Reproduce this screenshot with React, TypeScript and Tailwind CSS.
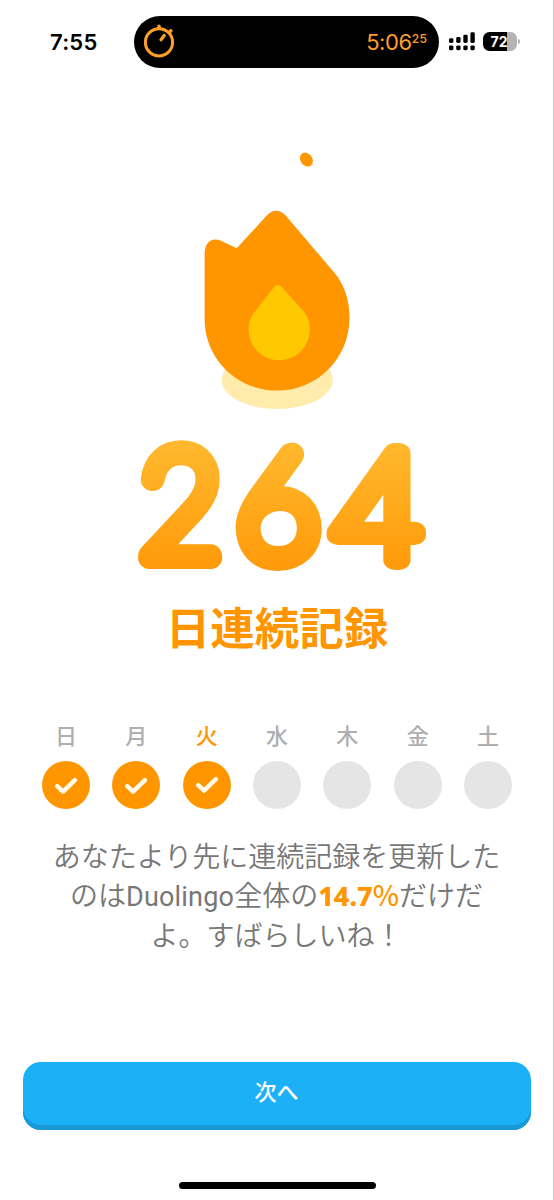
const days = [
  { label: "日", done: true },
  { label: "月", done: true },
  { label: "火", done: true, today: true },
  { label: "水", done: false },
  { label: "木", done: false },
  { label: "金", done: false },
  { label: "土", done: false },
];

function Stopwatch() {
  return (
    <svg className="ml-2.5 h-9 w-8" viewBox="0 0 32 36" fill="none" stroke="#ff9f2a" strokeLinecap="round">
      <circle cx="15" cy="20.3" r="13.6" strokeWidth="3" />
      <path d="M15 6V4.2M25.6 10l1.2-1.2" strokeWidth="3.6" />
      <path d="M17 17.8l3.2-4.3" strokeWidth="3.2" />
    </svg>
  );
}

function Signal() {
  return (
    <svg className="ml-[10px] h-[19px] w-[26px] shrink-0" viewBox="0 0 26 19" fill="#000">
      <rect x="0" y="6.2" width="4.4" height="4.8" rx="1.4" />
      <rect x="7.2" y="5" width="4.4" height="6" rx="1.4" />
      <rect x="14.3" y="2.7" width="4.4" height="8.3" rx="1.4" />
      <rect x="21.4" y="0.3" width="4.4" height="10.7" rx="1.4" />
      <rect x="0" y="13.4" width="4.4" height="4.8" rx="1.4" />
      <rect x="7.2" y="13.4" width="4.4" height="4.8" rx="1.4" />
      <rect x="14.3" y="13.4" width="4.4" height="4.8" rx="1.4" />
      <rect x="21.4" y="13.4" width="4.4" height="4.8" rx="1.4" />
    </svg>
  );
}

function StatusBar() {
  return (
    <header className="flex h-[52px] items-center font-['Inter',sans-serif]">
      <span className="ml-[50px] w-[84px] text-[22px] font-semibold leading-none tracking-[0.2px]">7:55</span>
      <div className="flex h-[52px] w-[305px] shrink-0 items-center justify-between rounded-full bg-black">
        <div className="-mt-[3px]">
          <Stopwatch />
        </div>
        <span className="mr-3 flex text-[22px] leading-none tracking-[-0.4px] text-[#ff9f2a]">
          5:06<sup className="top-0 mt-[2px] text-[12px] font-medium leading-none tracking-[0.2px]">25</sup>
        </span>
      </div>
      <Signal />
      <div className="ml-[8px] flex h-[19px] w-[34px] items-center justify-center rounded-[6.5px] bg-[linear-gradient(90deg,#000_72%,#b4b4b4_72%)] pr-0.5 text-[14px] font-bold leading-none text-white">
        72
      </div>
      <div className="ml-px h-[5px] w-[2px] rounded-r-full bg-[#b4b4b4]" />
    </header>
  );
}

function Flame() {
  return (
    <svg className="h-[280px] w-[180px]" viewBox="190 140 180 280">
      <ellipse cx="277.2" cy="380" rx="55.6" ry="29" fill="#ffecad" />
      <ellipse cx="306.4" cy="159.6" rx="6" ry="7.4" transform="rotate(-35 306.4 159.6)" fill="#ff9600" />
      <path
        d="M204.6 254C204.6 243 211 237 220.5 240.6L236.7 248.2L267.5 214.8Q276 206.8 285 214.8L334 272.2C344 284 349.5 299 349.5 317.5C349.5 359 317 390.6 277 390.6C237 390.6 204.6 359 204.6 319Z"
        fill="#ff9600"
      />
      <path
        d="M274.3 286.7Q277.8 283.3 281.4 286.7L303.5 311C307.5 316 309.8 322 309.8 329C309.8 346.5 296.5 360.2 279 360.2C262 360.2 248.7 346.5 248.7 329.5C248.7 322 251 316.5 255 311.5Z"
        fill="#ffc800"
      />
    </svg>
  );
}

// Thick rounded stroke over a thin face gives the digits their soft ends
function StreakCount() {
  return (
    <svg className="h-[150px] w-[310px] overflow-visible" viewBox="130 430 310 150">
      <defs>
        <linearGradient id="count" gradientUnits="userSpaceOnUse" x1="0" y1="440" x2="0" y2="572">
          <stop offset="0" stopColor="#ffb92e" />
          <stop offset="1" stopColor="#ff9a0a" />
        </linearGradient>
      </defs>
      <g fill="url(#count)" stroke="url(#count)" strokeWidth="23.5" strokeLinejoin="round" className="font-thin">
        <text
          y="558.5"
          transform="translate(139.8 0) scale(0.955 1)"
          className="font-['Lato',sans-serif] text-[148px]"
        >
          2
        </text>
        <text y="558.5" transform="translate(235.5 0) scale(0.985 1)" className="font-['Lato',sans-serif] text-[148px]">
          6
        </text>
        <text
          y="560"
          transform="translate(325.5 0) scale(1.16 1)"
          strokeWidth="20"
          className="font-['Inter',sans-serif] text-[147px]"
        >
          4
        </text>
      </g>
    </svg>
  );
}

function Day({ label, done, today }: { label: string; done: boolean; today?: boolean }) {
  return (
    <div className="flex w-12 flex-col items-center gap-[11px]">
      <span className={`text-[22px] font-medium leading-8 ${today ? "text-[#ff9600]" : "text-[#afafaf]"}`}>
        {label}
      </span>
      <div className={`flex size-12 items-center justify-center rounded-full ${done ? "bg-[#ff9600]" : "bg-[#e5e5e5]"}`}>
        {done && (
          <svg
            className={`h-[18px] w-6 ${today ? "" : "mt-[2px]"}`}
            viewBox="0 0 24 18"
            fill="none"
            stroke="#fff9ea"
            strokeWidth="4.4"
            strokeLinecap="round"
            strokeLinejoin="round"
          >
            <path d="M3.2 9.2L9.1 14.7L20.9 3.2" />
          </svg>
        )}
      </div>
    </div>
  );
}

export default function App() {
  return (
    <main className="flex h-[1200px] w-[554px] flex-col items-center border-r border-[#c8c8c8] bg-white pt-[15.5px] font-['Noto_Sans_CJK_JP',sans-serif]">
      <div className="w-full">
        <StatusBar />
      </div>
      <div className="mt-[72.5px] flex h-[280px] w-full pl-[190px]">
        <Flame />
      </div>
      <div className="mt-[10px] flex h-[150px] w-full pl-[130px]">
        <StreakCount />
      </div>
      <h1 className="mt-[14px] pl-px text-[44.5px] font-bold leading-[64px] text-[#ff9600]">日連続記録</h1>

      <section className="ml-px mt-[59.5px] flex w-[470px] justify-between">
        {days.map((day) => (
          <Day key={day.label} {...day} />
        ))}
      </section>

      <p className="mt-[27px] whitespace-nowrap text-center text-[28px] font-[350] leading-[39.5px] text-[#777777]">
        あなたより先に連続記録を更新した
        <br />
        のは
        <span className="font-['Roboto',sans-serif] text-[27px] font-normal leading-none tracking-[0.2px]">Duolingo</span>
        全体の
        <span className="font-['Noto_Sans',sans-serif] text-[27px] font-extrabold leading-none text-[#ff9600]">14.7</span>
        <span className="font-medium leading-none text-[#ff9600]">%</span>だけだ
        <br />
        よ。すばらしいね！
      </p>

      <button className="mt-auto h-[68px] w-[508px] rounded-[18px] bg-[#1cb0f6] pb-3 text-[22px] font-medium text-white shadow-[inset_0_-5px_0_#1899d6]">
        次へ
      </button>
      <div className="mb-[11px] ml-px mt-[52px] h-[7px] w-[197px] rounded-full bg-black" />
    </main>
  );
}
